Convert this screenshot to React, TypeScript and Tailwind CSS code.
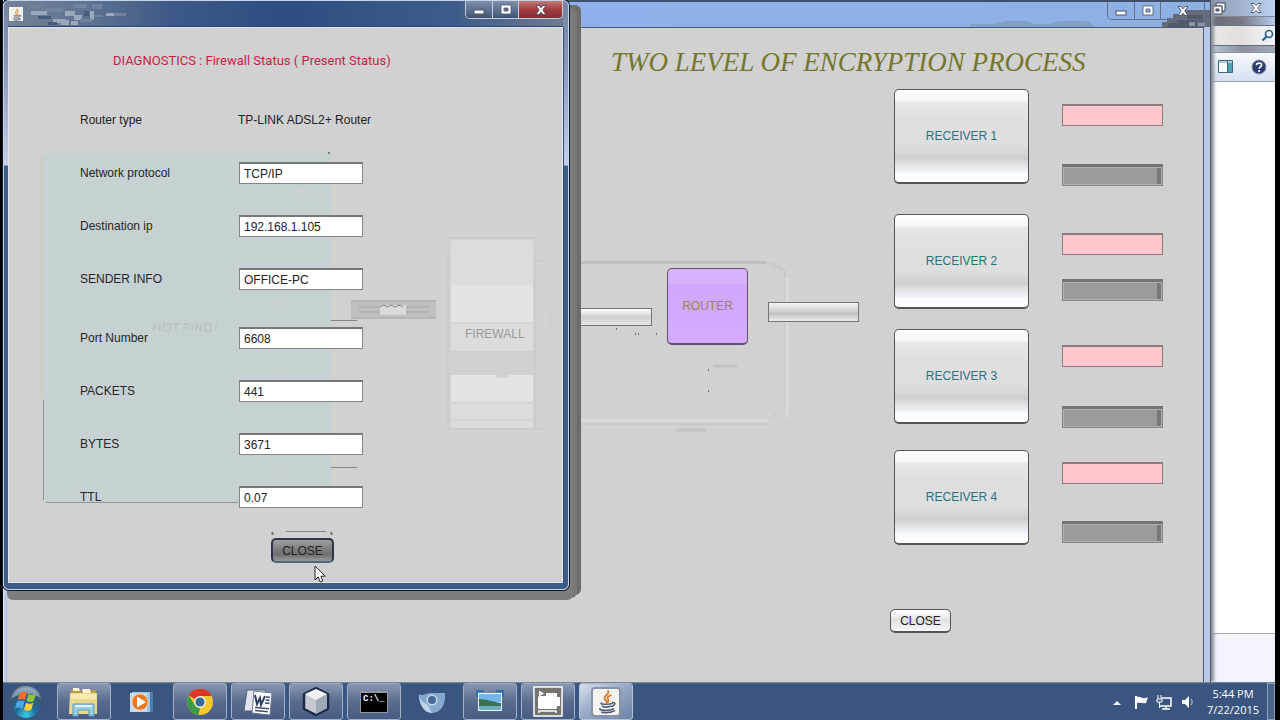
import type { ReactNode } from "react";

const sans = "font-['Liberation_Sans',Arial,sans-serif]";

type Field = { id: string; label: string; value: string };

const networkFields: Field[] = [
  { id: "protocol", label: "Network protocol", value: "TCP/IP" },
  { id: "destination", label: "Destination ip", value: "192.168.1.105" },
  { id: "sender", label: "SENDER INFO", value: "OFFICE-PC" },
];

const trafficFields: Field[] = [
  { id: "port", label: "Port Number", value: "6608" },
  { id: "packets", label: "PACKETS", value: "441" },
  { id: "bytes", label: "BYTES", value: "3671" },
  { id: "ttl", label: "TTL", value: "0.07" },
];

const receivers = [
  { name: "RECEIVER 1", row: "mt-0", stack: "pt-[15px] gap-[38px]" },
  { name: "RECEIVER 2", row: "mt-[30px]", stack: "pt-[19px] gap-[24px]" },
  { name: "RECEIVER 3", row: "mt-[20px]", stack: "pt-[16px] gap-[39px]" },
  { name: "RECEIVER 4", row: "mt-[26px]", stack: "pt-[12px] gap-[37px]" },
];

function FieldRow({ field }: { field: Field }) {
  return (
    <div className="flex h-[22px] items-center">
      <label htmlFor={field.id} className="w-[159px] text-xs text-[#262626]">
        {field.label}
      </label>
      <input
        id={field.id}
        readOnly
        defaultValue={field.value}
        className="h-[22px] w-[124px] border border-t-2 border-[#858585] border-t-[#777] bg-white px-1 text-xs text-[#222] outline-none"
      />
    </div>
  );
}

function MinGlyph() {
  return (
    <svg width="12" height="12" viewBox="0 0 12 12">
      <rect x="1" y="6" width="10" height="4" fill="#fff" stroke="#4b5568" />
    </svg>
  );
}

function MaxGlyph() {
  return (
    <svg width="12" height="12" viewBox="0 0 12 12">
      <path d="M1 1h10v9H1zM4 4h4v3H4z" fill="#fff" fillRule="evenodd" stroke="#4b5568" strokeWidth=".8" />
    </svg>
  );
}

function RestoreGlyph() {
  return (
    <svg width="14" height="13" viewBox="0 0 14 13">
      <path d="M4 1h9v8h-3V4H4z" fill="#fff" stroke="#3d4654" />
      <path d="M1 4h9v8H1zM4 7h3v2H4z" fill="#fff" fillRule="evenodd" stroke="#3d4654" />
    </svg>
  );
}

function CloseGlyph() {
  return (
    <svg width="14" height="12" viewBox="0 0 14 12">
      <path d="M2 1.500h3l2 2.300 2-2.300h3L8.800 6l3.200 4.500H9L7 8.200 5 10.500H2L5.200 6z" fill="#fff" stroke="#4a4f5c" strokeWidth=".9" />
    </svg>
  );
}

function CaptionButtons({ active }: { active: boolean }) {
  const edge = active ? "border-[#c3cede]" : "border-[#5d7092]";
  return (
    <div className={`flex h-[18px] overflow-hidden rounded-b-[5px] border border-t-0 ${edge}`}>
      <button aria-label="Minimize" className={`flex w-[27px] items-center justify-center border-r ${edge} ${active ? "bg-gradient-to-b from-[#8291ab] to-[#3f5479]" : ""}`}>
        <MinGlyph />
      </button>
      <button aria-label="Maximize" className={`flex w-[26px] items-center justify-center border-r ${edge} ${active ? "bg-gradient-to-b from-[#8291ab] to-[#3f5479]" : ""}`}>
        <MaxGlyph />
      </button>
      <button aria-label="Close window" className={`flex w-[43px] items-center justify-center ${active ? "bg-gradient-to-b from-[#c07c7a] via-[#a23c3c] to-[#7f2f37]" : ""}`}>
        <CloseGlyph />
      </button>
    </div>
  );
}

function JavaCup({ size }: { size: number }) {
  return (
    <svg width={size} height={size} viewBox="0 0 24 24" fill="none" strokeLinecap="round">
      <path d="M13.500 2c2 3-4 4-3.500 7 .2 1.500 2 2 2 3.500M16 6c-3 1.500-3.500 2.500-2.500 4 .8 1.200.5 2-.5 3" stroke="#e27a2b" strokeWidth="1.800" />
      <path d="M7 13.500c-1.500 1.500 9 1.500 10.500.2M8 16.500c1 1.200 6.500 1.200 8 0M18 13c3-.5 2.500 3-.8 3.500M6 19c-2.500 1.500 9 2.500 12.500 0M7.500 22.300c4 .8 9 .3 12-1.300" stroke="#4c5d74" strokeWidth="1.500" />
    </svg>
  );
}

function ExplorerWindow() {
  return (
    <section className="absolute inset-y-0 right-0 flex w-[68px] flex-col overflow-hidden bg-white">
      <div className="relative flex h-[17px] items-center justify-between border-b border-[#7c8899] bg-gradient-to-r from-[#8b98b0] to-[#bccfee] pr-[12px] pl-[5px]">
        <button aria-label="Restore explorer"><RestoreGlyph /></button>
        <button aria-label="Close explorer"><CloseGlyph /></button>
      </div>
      <div className="h-[9px] border-b border-[#66758b] bg-gradient-to-r from-[#696b72] via-[#777982] to-[#b6cbed]" />
      <div className="flex h-[20px] items-center justify-end border-b border-[#5d6b80] bg-gradient-to-r from-[#eceae9] via-[#e2dedc] to-[#f6f7fb] pr-px">
        <svg width="13" height="13" viewBox="0 0 13 13" fill="none">
          <path d="M6 7 1.500 11.500" stroke="#356b98" strokeWidth="2.400" />
          <circle cx="8" cy="5" r="3.500" stroke="#2d638f" strokeWidth="1.700" />
        </svg>
      </div>
      <div className="h-[7px] border-b border-[#8492a8] bg-gradient-to-r from-[#c4d3ea] via-[#8c919c] to-[#a3a9b6]" />
      <div className="flex h-[29px] items-center gap-[18px] border-b border-[#9ca8b8] bg-gradient-to-b from-[#f8fafd] via-[#e6edf7] to-[#d5e0ef] pl-[11px]">
        <svg width="15" height="14" viewBox="0 0 15 14">
          <path d="M.5.500h14v12H.5z" fill="#fafdff" stroke="#3a6680" />
          <path d="M1 1h13v2H1z" fill="#b4cbd9" />
          <path d="M10 3h4v9h-4z" fill="#4da4b6" />
          <path d="M9.500 1v11" stroke="#3a6680" />
        </svg>
        <svg width="16" height="16" viewBox="0 0 16 16">
          <circle cx="8" cy="8" r="7" fill="#2d3c70" stroke="#8b95ab" />
          <path d="M5.500 6.300C5.500 3.300 10.800 3.300 10.500 6.200 10.300 8 8.200 7.800 8.200 9.800M8.200 11v2" fill="none" stroke="#fff" strokeWidth="1.800" />
        </svg>
      </div>
      <div className="flex-1 bg-white" />
      <div className="h-[49px] border-t border-[#a5a8ae] bg-[#f2f3fb]" />
    </section>
  );
}

function NetworkCanvas() {
  return (
    <div className="pointer-events-none absolute inset-0">
      <svg className="absolute top-[228px] left-[560px]" width="230" height="180" viewBox="0 0 230 180" fill="none">
        <path d="M0 6.500h199" stroke="#c0c0c0" strokeWidth="3" />
        <path d="M200 8h6v3h6v3h5M0 168h200M204 162l5-5M217 14v142" stroke="#cacaca" strokeWidth="2" />
        <path d="M0 164.500h200M219 22v140" stroke="#d8d8d8" strokeWidth="4" />
        <path d="M48 73h1M67 78h1M70 78h1M88 78h1M140 114h1M140 135h1" stroke="#555" strokeWidth="1.500" />
        <path d="M145 110h24M108 174h30" stroke="#c3c3c3" strokeWidth="3" />
      </svg>
      <div className="absolute top-[280px] left-[560px] h-[18px] w-[84px] border border-[#747474] bg-gradient-to-b from-white via-[#d0d0d0] to-[#e5e5e5]" />
      <button className="absolute top-[240px] left-[659px] h-[77px] w-[81px] rounded-[5px] border border-b-2 border-[#63516f] bg-[linear-gradient(#d9b2ff_20%,#d2a7fb_21%,#d5abff)] text-xs text-[#9a8650]">
        ROUTER
      </button>
      <div className="absolute top-[274px] left-[760px] h-[20px] w-[91px] border border-[#747474] bg-[linear-gradient(#f4f4f4,#cfcfcf_48%,#c0c0c0_58%,#ececec)]" />
    </div>
  );
}

function EncryptionWindow() {
  return (
    <section className="absolute inset-y-0 right-[64px] left-0 flex flex-col border-r border-l border-r-[#4a5a70] border-l-[#dfe9f8] bg-[#b9c9e6] shadow-[3px_0_3px_#8a8f99]">
      <header className="relative flex h-[27px] items-start justify-end overflow-hidden border-t-2 border-[#40516c] bg-gradient-to-r from-[#7d9fdc] via-[#8fb2ec] to-[#8fb0e2] pr-[5px]">
        <svg className="absolute right-0 bottom-0" width="240" height="25" viewBox="0 0 240 25">
          <path d="M0 25v-3h24l12-3h20l9 3h16l8-3h28l8 6z" fill="#829fc9" />
          <path d="M192 25v-5h5v-4h6v-4h8V8h29v17z" fill="#656b7b" />
          <path d="M198 21h9v-4h10v-4h16v6h-6v6h-29z" fill="#535966" />
          <path d="M219 20h6v4h-6zm9 1h7v3h-7z" fill="#8c93a4" />
        </svg>
        <div className="relative">
          <CaptionButtons active={false} />
        </div>
      </header>
      <div className="relative mr-[6px] ml-1 flex-1 overflow-hidden border-t border-r border-[#465c7c] bg-[#d1d1d1]">
        <NetworkCanvas />
        <h1 className="mt-[18px] ml-[603px] font-['Liberation_Serif','Times_New_Roman',serif] text-[27px] leading-8 whitespace-nowrap text-[#74762b] italic">
          TWO LEVEL OF ENCRYPTION PROCESS
        </h1>
        <div className="mt-[11px] ml-[886px]">
          {receivers.map((r) => (
            <div key={r.name} className={`flex h-[95px] items-start gap-[33px] ${r.row}`}>
              <button className="h-[95px] w-[135px] rounded-[5px] border border-b-2 border-[#555] bg-[linear-gradient(#fff_0%,#f6f6f9_11%,#e7e7e7_14%,#dfdfdf_32%,#dedede_60%,#d6d6d6_68%,#cecece_74%,#e2e2e4_81%,#edf0f8_88%,#f9faff_90%,#fff)] text-xs text-[#2c7177]">
                {r.name}
              </button>
              <div className={`flex flex-col ${r.stack}`}>
                <input
                  aria-label={`${r.name} status`}
                  readOnly
                  className="h-[22px] w-[101px] border border-t-2 border-[#8b7c7e] bg-[#ffc6cb] px-1 text-xs outline-none"
                />
                <div className="h-[22px] w-[101px] border border-t-[3px] border-[#858585] border-t-[#747474] p-px">
                  <div className="h-full border-r-4 border-r-[#777] bg-[#9a9a9a] shadow-[0_0_0_1px_#b0b0b0]" />
                </div>
              </div>
            </div>
          ))}
          <button className="mt-[64px] -ml-1 h-[24px] w-[61px] rounded-[5px] border border-b-2 border-[#555] bg-gradient-to-b from-white via-[#dfe1e4] to-[#f6f8fc] text-xs text-[#222]">
            CLOSE
          </button>
        </div>
      </div>
    </section>
  );
}

function FadedDiagram() {
  return (
    <div className="pointer-events-none absolute inset-0">
      <div className="absolute top-[125px] left-[36px] h-[350px] w-[286px] bg-[#c6d1d3]" />
      <svg className="absolute top-0 left-0" width="553" height="555" viewBox="0 0 553 555" fill="none">
        <path d="M34.500 372v100M37 474.500h192" stroke="#8c9495" />
        <path d="M322 292.500h26M322 439.500h26M277 503.500h40" stroke="#858585" />
        <path d="M263.500 504v3M322.500 504v3M319 125h2" stroke="#777" strokeWidth="2" />
        <path d="M33 130v240" stroke="#cbcbcb" strokeWidth="3" />
        <path d="M288 163h12M300 167h12M264 273h10M268 276h8M265 343h4M270 346h5M265 441h6M270 445h5" stroke="#d0d1d1" strokeWidth="3" />
        <path d="M145 303v-7l6 7v-7M155 296h6v7h-6zM164 296h7M167 296v7M174 296h6M174 300h5M183 303v-7M187 303v-7l5 7v-7M196 296h6v7h-6zM207 296v7" stroke="#b3bdbe" />
        <g>
          <path d="M342 273h85v18h-85z" fill="#c0c0c0" />
          <path d="M342 273h85M342 290h85" stroke="#b6b6b6" strokeWidth="2" />
          <path d="M350 279h70M350 284h70" stroke="#b3b3b3" strokeWidth="2" />
          <path d="M371 277h26v10h-26z" fill="#dadada" />
          <path d="M371 279l4-2 3 2 4-2 4 2 4-2 4 2" stroke="#858585" />
        </g>
        <path d="M442 212h82v188h-82z" fill="#dcdcdc" />
        <path d="M442 257h82v38h-82zM442 347h82v26h-82z" fill="#e3e3e3" />
        <path d="M442 323h82v24h-82z" fill="#d0d0d0" />
        <path d="M442 295h82M442 375h82M442 392h82" stroke="#d5d5d5" strokeWidth="2" />
        <path d="M437 210h90M437 401h92M439 225v170M526 225v175M541 280v18M525 233h9M527 401h8" stroke="#cccccc" strokeWidth="2" />
        <path d="M487 348h13" stroke="#d2d2d2" strokeWidth="3" />
      </svg>
      <span className="absolute top-[298px] left-[456px] text-xs leading-4 text-[#999]">FIREWALL</span>
    </div>
  );
}

function DiagnosticsDialog() {
  return (
    <section className="absolute top-0 left-0 flex flex-col rounded-[6px] border border-[#c4d4eb] bg-[linear-gradient(#75859f_0px,#8995b8_60px,#c6cfe8_164px,#3f5c87_165px)] pr-[5px] pb-[6px] pl-[4px] shadow-[0_0_0_1px_#111827,4px_10px_0_0_#7c7c7c,8px_8px_0_0_#777,12px_5px_0_0_#6c6c6c]">
      <header className="relative flex h-[26px] items-start justify-between bg-[linear-gradient(90deg,#758196,#5f7392_14%,#3c5886_30%,#2e4e80_50%,#3e5c89_80%,#6d7b91)] pl-px">
        <svg className="absolute top-0 left-[20px]" width="120" height="26" viewBox="0 0 120 26">
          <path d="M3 10h16v4H3zM37 10h10v5H37zM25 18h13v4H25zM46 14h8v5h-8zM62 10h4v9h-4zM78 12h8v3h-8zM33 19h8v5h-8zM43 20h7v4h-7z" fill="#9aa8bc" />
          <path d="M0 4h13v3H0zM18 7h17v4H18zM45 3h14v4H45zM64 3h10v5H64zM52 18h12v3H52zM66 14h9v2h-9zM86 12h12v3H86z" fill="#72839e" />
          <path d="M10 15h13v3H10zM56 10h5v5h-5zM20 21h9v3h-9z" fill="#465b79" />
        </svg>
        <span className="mt-[6px] flex size-[14px] items-center justify-center bg-[#f0f0ec]">
          <JavaCup size={13} />
        </span>
        <CaptionButtons active />
      </header>
      <div className="relative border border-[#dce6f4] bg-[#d1d1d1] shadow-[0_-1px_0_#28436d,1px_0_0_#324f7b]">
        <FadedDiagram />
        <form className="relative h-[554px] w-[553px] pt-[23px] pl-[71px]" onSubmit={(e) => e.preventDefault()}>
          <h2 className="ml-[33px] font-['Roboto',Tahoma,sans-serif] text-[13px] leading-5 whitespace-nowrap text-[#c51f45]">
            DIAGNOSTICS : Firewall Status ( Present Status)
          </h2>
          <div className="mt-[38px] flex flex-col gap-[31px]">
            <div className="flex h-[22px] items-center text-xs text-[#222]">
              <span className="w-[158px]">Router type</span>
              <span>TP-LINK ADSL2+ Router</span>
            </div>
            {networkFields.map((f) => <FieldRow key={f.id} field={f} />)}
          </div>
          <div className="mt-[37px] flex flex-col gap-[31px]">
            {trafficFields.map((f) => <FieldRow key={f.id} field={f} />)}
          </div>
          <button className="mt-[30px] ml-[191px] block h-[25px] w-[63px] rounded-[5px] border-2 border-[#2c3648] border-b-[#53627b] bg-[linear-gradient(#a0a0a0,#808080_40%,#707070_70%,#9a9a9a)] text-xs text-[#222]">
            CLOSE
          </button>
          <svg className="absolute top-[537px] left-[305px]" width="13" height="18" viewBox="0 0 13 18">
            <path d="M1 1v14l3.200-3 2 5 2.600-1-2-4.800h4.500z" fill="#fff" stroke="#222" />
          </svg>
        </form>
      </div>
    </section>
  );
}

function TaskButton({ label, plain, bright, children }: { label: string; plain?: boolean; bright?: boolean; children: ReactNode }) {
  const look = plain
    ? "border-transparent"
    : bright
      ? "border-[#b6c2d6] bg-gradient-to-br from-[#d8e0ec] via-[#94a6c4] to-[#6d83aa]"
      : "border-[#a3b1c9] bg-gradient-to-b from-[#8997b1] via-[#5a6c8e] to-[#485d84]";
  return (
    <button aria-label={label} className={`flex h-[37px] w-[54px] items-center justify-center rounded-[3px] border ${look}`}>
      {children}
    </button>
  );
}

function Taskbar() {
  return (
    <footer className="flex h-[38px] shrink-0 items-center justify-between border-t border-[#70809b] bg-[#3a557f]">
      <nav className="flex items-center gap-1" aria-label="Taskbar">
        <button aria-label="Start" className="flex w-[50px] justify-center pr-1">
          <svg width="36" height="36" viewBox="0 0 36 36">
            <defs>
              <radialGradient id="orb" cx=".5" cy=".9" r=".9">
                <stop offset="0" stopColor="#35d3ee" />
                <stop offset=".35" stopColor="#256a97" />
                <stop offset=".7" stopColor="#365777" />
                <stop offset="1" stopColor="#8ba3b8" />
              </radialGradient>
            </defs>
            <circle cx="18" cy="18" r="16.500" fill="url(#orb)" stroke="#3c526c" />
            <path d="M4 14C8 0 28 0 32 14 24 8 13 9 4 14z" fill="#d5e0e9" opacity=".4" />
            <path d="M12 9c3-1.500 5-1.500 7 0l-2 7c-3-1.500-5-1.500-7.500 0z" fill="#ef6b2e" />
            <path d="M20.500 10c2.500 1.200 5 1.200 7.500 0l-2.200 7c-2.500 1.200-4.800 1.200-7.300 0z" fill="#8cc63f" />
            <path d="M9 17.500c3-1.500 5-1.500 7.500 0l-2 7c-2.500-1.500-5-1.500-7.500 0z" fill="#4ba8e5" />
            <path d="M18 18.800c2.500 1.200 5 1.200 7.300 0l-2 7c-2.500 1.200-5 1.200-7.300 0z" fill="#fbcf3c" />
          </svg>
        </button>
        <TaskButton label="File Explorer">
          <svg width="32" height="30" viewBox="0 0 32 30">
            <path d="M3 3h9l2 2h7l1-2h6v20H3z" fill="#b99b4e" />
            <path d="M5 1h6l1 3H5zM14 2h8l1 4h-8z" fill="#fff6cf" />
            <path d="M2 6h27v21H1z" fill="#ead98c" />
            <path d="M3 7h25v5H3z" fill="#f5ebb3" />
            <path d="M5 29V17h21v12h-5v-6H10v6z" fill="#97cbe2" stroke="#5b9abb" />
            <path d="M7 19h17" stroke="#e1f4fb" strokeWidth="2" />
          </svg>
        </TaskButton>
        <TaskButton label="Media Player" plain>
          <svg width="26" height="24" viewBox="0 0 26 24">
            <path d="M6 2h18v20H6z" fill="#4c7db0" />
            <path d="M3 2h18v20H3z" fill="#9bc8e5" />
            <path d="M1 3h17v19H1z" fill="#c4deed" />
            <circle cx="11" cy="12" r="8" fill="#ef7624" stroke="#f8c090" />
            <path d="M8 6.500v11l9-5.500z" fill="#fff" />
          </svg>
        </TaskButton>
        <TaskButton label="Chrome">
          <svg width="28" height="28" viewBox="0 0 28 28">
            <circle cx="14" cy="14" r="13" fill="#f6c82d" />
            <path d="M14 14 2.700 7.500A13 13 0 0 1 25.700 8H14z" fill="#dc3427" />
            <path d="M2.700 7.500 9 17l5 3-1.500 7A13 13 0 0 1 2.700 7.500z" fill="#3d9b45" />
            <circle cx="14" cy="14" r="6" fill="#f2f3ee" />
            <circle cx="14" cy="14" r="4.600" fill="#3b6a94" />
          </svg>
        </TaskButton>
        <TaskButton label="Word">
          <svg width="30" height="28" viewBox="0 0 30 28">
            <path d="M4 2h18l2 21H1z" fill="#e2e5ed" stroke="#51607a" />
            <path d="m11 3 18 2-2 22-18-2z" fill="#fff" stroke="#6a7891" />
            <path d="m12 7 2 9 3-6 1 7 4-9" fill="none" stroke="#303d60" strokeWidth="2" />
            <path d="m23 9 4 .4M22.500 12l4 .4M22 15l4.500.4M12 19.500l14 1.300M12 22.500l13 1.300" stroke="#44516f" strokeWidth="1.600" />
          </svg>
        </TaskButton>
        <TaskButton label="VirtualBox">
          <svg width="30" height="31" viewBox="0 0 30 31" stroke="#1d2a45" strokeWidth="2.500" strokeLinejoin="round">
            <path d="m15 2 12 6v15l-12 6-12-6V8z" fill="#c4c9d3" />
            <path d="m15 3 11 5-11 6L4 8z" fill="#f0f2f6" strokeWidth="0" />
            <path d="m15 14 11-6v14l-11 6z" fill="#9ea8b8" strokeWidth="0" />
          </svg>
        </TaskButton>
        <TaskButton label="Command Prompt">
          <span className="flex h-[22px] w-[28px] items-start border border-t-2 border-[#9098a6] bg-black pl-[2px] font-['Liberation_Mono',monospace] text-[9px] leading-[13px] font-bold whitespace-nowrap text-white">
            C:\_
          </span>
        </TaskButton>
        <TaskButton label="Chromium" plain>
          <svg width="28" height="24" viewBox="0 0 28 24">
            <path d="M1 4c4 3 6-1 13-1h13c1 11-4 20-13 20C6 23 1 14 1 4z" fill="#86a9cf" />
            <path d="M1 4c1 6 4 9 8 10l5 9C6 23 1 14 1 4z" fill="#c2d5e8" />
            <circle cx="14" cy="10" r="5.500" fill="#c5d8e9" />
            <circle cx="14" cy="10" r="4" fill="#446b99" />
          </svg>
        </TaskButton>
        <TaskButton label="Pictures">
          <svg width="28" height="24" viewBox="0 0 28 24">
            <path d="M2 3h24v18H2z" fill="#e7f5fb" />
            <path d="M3 4h22v8H3z" fill="#72b7ed" />
            <path d="M3 9c8 0 14 3 22 4v4H3z" fill="#3c7057" />
            <path d="M3 16h22v4H3z" fill="#6caec0" />
            <path d="M1 7V1h7M20 1h7v6" fill="none" stroke="#2a71b3" strokeWidth="2" />
          </svg>
        </TaskButton>
        <TaskButton label="Recorder">
          <svg width="30" height="31" viewBox="0 0 30 31">
            <path d="M1 1h28v29H1z" fill="#77736d" stroke="#fff" strokeWidth="1.500" />
            <path d="M6 4.500 11 7.500 6 10.500z" fill="#fff" />
            <rect x="5" y="10" width="19" height="13" rx="1.500" fill="#fff" />
            <path d="M13 7h11v5H13zM24 11h3v9h-3z" fill="#fff" />
            <path d="M6 27v-2h17v2" fill="none" stroke="#fff" strokeWidth="1.500" />
          </svg>
        </TaskButton>
        <TaskButton label="Java" bright>
          <span className="flex size-[30px] items-center justify-center rounded-[4px] border-2 border-[#8793a5] bg-[#f5f4f1]">
            <JavaCup size={25} />
          </span>
        </TaskButton>
      </nav>
      <div className="flex h-full items-center text-white">
        <svg width="84" height="18" viewBox="0 0 84 18" className="mr-[10px]">
          <path d="m4 12 4-4 4 4z" fill="#f2f5fa" />
          <path d="M27 3v13" stroke="#fff" strokeWidth="2" />
          <path d="M28 4c4-1 4 1 6 1s4 0 5-1l-2 6c-3 1-5-1-9 0z" fill="#fff" />
          <path d="M53 5h9v8H51M57 13v3M53 16h8" fill="none" stroke="#fff" strokeWidth="1.500" />
          <path d="M49 2v4M52 2v4M48 6h5v3h-5zM50.500 9v6" stroke="#fff" fill="#3a557f" />
          <path d="M73 7h3l4-4v12l-4-4h-3z" fill="#fff" />
          <path d="M82 6c1.500 2 1.500 4 0 6" fill="none" stroke="#cdd9ea" />
        </svg>
        <time className="w-[60px] text-center font-['Open_Sans','Noto_Sans',sans-serif] text-[11px] leading-4">
          5:44 PM
          <br />
          7/22/2015
        </time>
        <button aria-label="Show desktop" className="ml-[4px] h-full w-[8px] border border-[#8d9eb9] bg-[#4c658b]" />
      </div>
    </footer>
  );
}

export default function App() {
  return (
    <div className={`flex h-screen flex-col overflow-hidden bg-black pr-[5px] pl-[3px] ${sans}`}>
      <main className="relative min-h-0 flex-1">
        <ExplorerWindow />
        <EncryptionWindow />
        <DiagnosticsDialog />
      </main>
      <Taskbar />
    </div>
  );
}
